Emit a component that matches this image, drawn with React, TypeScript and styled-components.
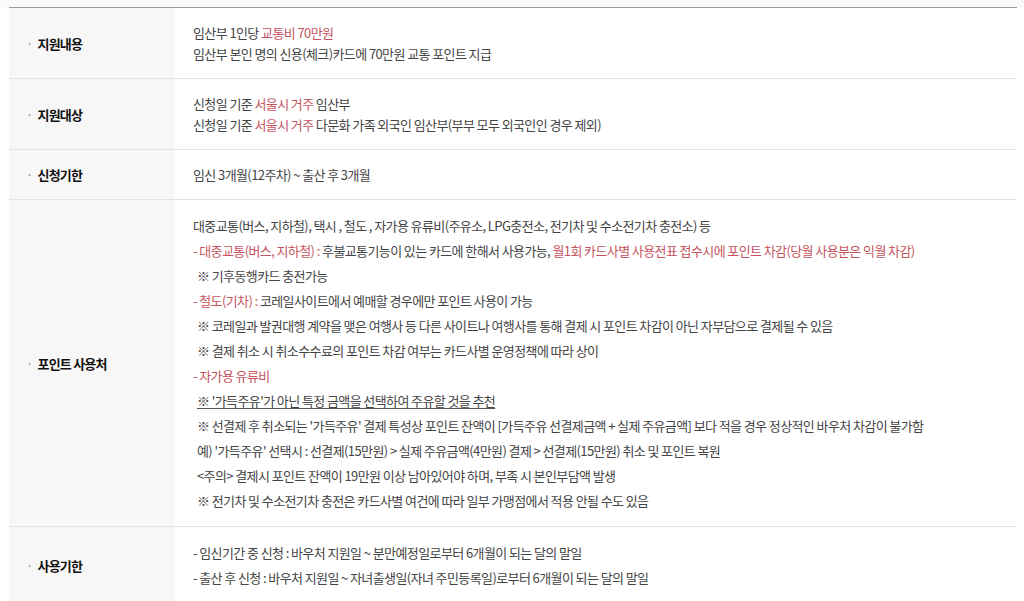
import React from 'react';
import styled, { createGlobalStyle } from 'styled-components';

const GlobalStyle = createGlobalStyle`
  html, body {
    margin: 0;
    padding: 0;
    background: #ffffff;
  }
  body {
    font-family: "Noto Sans CJK KR", "Noto Sans", sans-serif;
    color: #444;
  }
`;

// Style Tags
const Page = styled.div`
  padding: 7px 7px 0 9px;
  background: linear-gradient(#fafafa, #fafafa) top / 100% 7px no-repeat;
`;

const Table = styled.div`
  border-top: 1px solid #9a9a9a;
`;

const Row = styled.div`
  display: grid;
  grid-template-columns: 166px 1fr;
  border-bottom: 1px solid #e3e3e3;
`;

const Head = styled.div`
  display: flex;
  align-items: center;
  gap: 5px;
  padding-left: 17px;
  background: #f7f7f7;
  font-size: 13px;
  font-weight: 700;
  color: #111;
  letter-spacing: -0.8px;
`;

const Dot = styled.span`
  color: #888;
  font-weight: 400;
  font-size: 13px;
`;

const Cell = styled.div<{ $gap: number }>`
  padding: ${(p) => (p.$gap ? '15px' : '14px')} 18px;
  font-size: 13px;
  line-height: 21px;
  letter-spacing: -0.6px;
  color: #444;
`;

const Para = styled.p<{ $gap: number }>`
  height: 21px;
  margin: ${(p) => p.$gap}px 0 0;
  white-space: nowrap;

  &:first-child {
    margin-top: 0;
  }
`;

const Red = styled.span`
  color: #c5545e;
`;

const Note = styled.span`
  padding-left: 4px;

  u {
    text-decoration-color: #555;
    text-underline-offset: 2px;
  }
`;

interface RowData {
  label: string;
  lines: React.ReactNode[];
  gap: number;
}

const buildRows = (): RowData[] => [
  {
    label: '지원내용',
    gap: 0,
    lines: [
      <>임산부 1인당 <Red>교통비 70만원</Red></>,
      <>임산부 본인 명의 신용(체크)카드에 70만원 교통 포인트 지급</>,
    ],
  },
  {
    label: '지원대상',
    gap: 0,
    lines: [
      <>신청일 기준 <Red>서울시 거주</Red> 임산부</>,
      <>신청일 기준 <Red>서울시 거주</Red> 다문화 가족 외국인 임산부(부부 모두 외국인인 경우 제외)</>,
    ],
  },
  {
    label: '신청기한',
    gap: 0,
    lines: [<>임신 3개월(12주차) ~ 출산 후 3개월</>],
  },
  {
    label: '포인트 사용처',
    gap: 4,
    lines: [
      <>대중교통(버스, 지하철), 택시 , 철도 , 자가용 유류비(주유소, LPG충전소, 전기차 및 수소전기차 충전소) 등</>,
      <>
        <Red>- 대중교통(버스, 지하철) : </Red>후불교통기능이 있는 카드에 한해서 사용가능,{' '}
        <Red>월1회 카드사별 사용전표 접수시에 포인트 차감(당월 사용분은 익월 차감)</Red>
      </>,
      <Note>※ 기후동행카드 충전가능</Note>,
      <>
        <Red>- 철도(기차) : </Red>코레일사이트에서 예매할 경우에만 포인트 사용이 가능
      </>,
      <Note>※ 코레일과 발권대행 계약을 맺은 여행사 등 다른 사이트나 여행사를 통해 결제 시 포인트 차감이 아닌 자부담으로 결제될 수 있음</Note>,
      <Note>※ 결제 취소 시 취소수수료의 포인트 차감 여부는 카드사별 운영정책에 따라 상이</Note>,
      <Red>- 자가용 유류비</Red>,
      <Note><u>※ '가득주유'가 아닌 특정 금액을 선택하여 주유할 것을 추천</u></Note>,
      <Note>※ 선결제 후 취소되는 '가득주유' 결제 특성상 포인트 잔액이 [가득주유 선결제금액 + 실제 주유금액] 보다 적을 경우 정상적인 바우처 차감이 불가함</Note>,
      <Note>예) '가득주유' 선택시 : 선결제(15만원) &gt; 실제 주유금액(4만원) 결제 &gt; 선결제(15만원) 취소 및 포인트 복원</Note>,
      <Note>&lt;주의&gt; 결제시 포인트 잔액이 19만원 이상 남아있어야 하며, 부족 시 본인부담액 발생</Note>,
      <Note>※ 전기차 및 수소전기차 충전은 카드사별 여건에 따라 일부 가맹점에서 적용 안될 수도 있음</Note>,
    ],
  },
  {
    label: '사용기한',
    gap: 4,
    lines: [
      <>- 임신기간 중 신청 : 바우처 지원일 ~ 분만예정일로부터 6개월이 되는 달의 말일</>,
      <>- 출산 후 신청 : 바우처 지원일 ~ 자녀출생일(자녀 주민등록일)로부터 6개월이 되는 달의 말일</>,
    ],
  },
];

export default function App() {
  const rows = buildRows();
  return (
    <>
      <GlobalStyle />
      <Page>
        <Table>
          {rows.map((row) => (
            <Row key={row.label}>
              <Head>
                <Dot>·</Dot>
                {row.label}
              </Head>
              <Cell $gap={row.gap}>
                {row.lines.map((line, i) => (
                  <Para key={i} $gap={row.gap}>
                    {line}
                  </Para>
                ))}
              </Cell>
            </Row>
          ))}
        </Table>
      </Page>
    </>
  );
}
